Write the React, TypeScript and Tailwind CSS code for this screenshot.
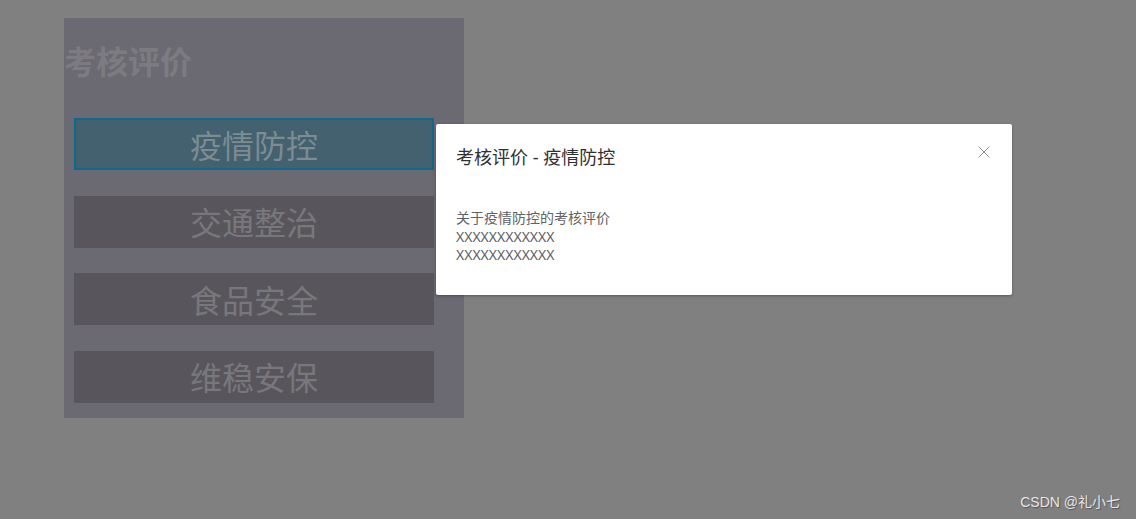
import React from "react";

const font = "font-['Noto_Sans','Noto_Sans_CJK_SC',sans-serif]";

export default function App() {
  const items = ["疫情防控", "交通整治", "食品安全", "维稳安保"];
  return (
    <div className={`relative w-[1136px] h-[519px] overflow-hidden bg-[#808080] ${font}`}>
      <div className="ml-16 pt-[18px]">
        <div className="w-[400px] h-[400px] bg-[#6b6971] flex flex-col">
          <h2 className="mt-[26px] text-[32px] leading-[36px] font-bold text-[#7c7b81]">考核评价</h2>
          <div className="mt-[38px] ml-[10px] w-[360px] flex flex-col gap-[25.5px]">
            {items.map((t, i) => (
              <div
                key={t}
                className={
                  i === 0
                    ? "h-[52px] pt-[3px] border-2 border-[#0d6a8c] bg-[#43616f] flex items-center justify-center text-[32px] text-[#7d8b92]"
                    : "h-[52px] pt-[3px] bg-[#58565c] flex items-center justify-center text-[32px] text-[#78777c]"
                }
              >
                {t}
              </div>
            ))}
          </div>
        </div>
      </div>

      <div className="absolute left-[436px] top-[124px] w-[576px] h-[171px] bg-white rounded-[2px] shadow-[0_1px_3px_rgba(0,0,0,0.3)]">
        <div className="flex items-start justify-between pl-5 pr-[22px] pt-[21px]">
          <div className="text-[18px] leading-[24px] text-[#303133]">考核评价 - 疫情防控</div>
          <svg className="mt-[1px]" width="12" height="12" viewBox="0 0 12 12">
            <path d="M0.5 0.5 L11.5 11.5 M11.5 0.5 L0.5 11.5" stroke="#909399" strokeWidth="1" />
          </svg>
        </div>
        <div className="px-5 mt-[40px] text-[14px] leading-[18.5px] text-[#606266]">
          <div>关于疫情防控的考核评价</div>
          <div>XXXXXXXXXXXX</div>
          <div>XXXXXXXXXXXX</div>
        </div>
      </div>

      <div className="absolute right-[16px] bottom-[8px] text-[14px] leading-[18px] text-[#e6e6e6] font-['Liberation_Sans','Noto_Sans_CJK_SC',sans-serif] [text-shadow:1px_1px_1px_rgba(0,0,0,0.35)]">
        CSDN @礼小七
      </div>
    </div>
  );
}
